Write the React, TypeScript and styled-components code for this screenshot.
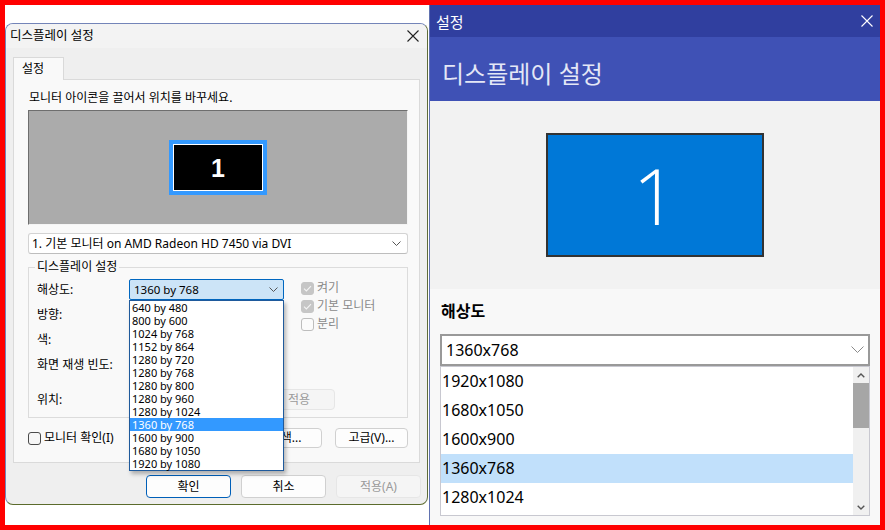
import React from "react";
import styled, { createGlobalStyle } from "styled-components";

const Global = createGlobalStyle`
  html, body { margin: 0; padding: 0; background: #fff; }
  body { font-family: "Noto Sans", "Noto Sans CJK KR", sans-serif; }
  * { box-sizing: border-box; }
`;

const Frame = styled.div`
  width: 885px;
  height: 530px;
  border: 5px solid #ff0000;
  background: #fff;
  display: flex;
  overflow: hidden;
`;

/* ---------- Left: classic dialog ---------- */

const LeftPane = styled.div`
  width: 424px;
  flex: none;
  padding-top: 18px;
`;

const Dialog = styled.div`
  width: 423px;
  height: 482px;
  background: #efefef;
  border: 1px solid;
  border-color: #7384b8 #5d6c3a #5b6b2c #7384b8;
  border-radius: 8px;
  overflow: hidden;
  display: flex;
  flex-direction: column;
  font-size: 12px;
  line-height: 14px;
  color: #000;
`;

const DlgTitleBar = styled.div`
  height: 24px;
  flex: none;
  background: #f3f3f3;
  display: flex;
  align-items: center;
  justify-content: space-between;
  padding: 0 8px 0 4px;
  font-size: 12.5px;
`;

const TabStrip = styled.div`
  padding: 9px 0 0 7px;
  display: flex;
`;

const Tab = styled.div`
  position: relative;
  z-index: 1;
  width: 51px;
  height: 23px;
  margin-bottom: -1px;
  background: #f9f9f9;
  border: 1px solid #d9d9d9;
  border-bottom: none;
  padding-left: 8px;
  line-height: 21px;
`;

const TabPanel = styled.div`
  margin-left: 7px;
  width: 407px;
  height: 384px;
  flex: none;
  background: #f9f9f9;
  border: 1px solid #dadada;
  padding: 10px 11px 0 14px;
  display: flex;
  flex-direction: column;
`;

const Instruction = styled.div`
  height: 16px;
  line-height: 16px;
  padding-left: 1px;
`;

const ArrangeArea = styled.div`
  margin-top: 4px;
  height: 115px;
  background: #ababab;
  border: 1px solid;
  border-color: #6e6e6e #f4f4f4 #f4f4f4 #6e6e6e;
  display: flex;
  align-items: center;
  justify-content: center;
`;

const SmallMonitor = styled.div`
  width: 98px;
  height: 55px;
  border: 4px solid #3399ff;
`;

const SmallScreen = styled.div`
  height: 100%;
  border: 1px solid #fff;
  background: #000;
  color: #fff;
  font-family: "Liberation Sans", Arial, sans-serif;
  font-weight: bold;
  font-size: 25px;
  display: flex;
  align-items: center;
  justify-content: center;
`;

const MonitorSelect = styled.div`
  margin-top: 8px;
  height: 21px;
  background: #fff;
  border: 1px solid #d3d3d3;
  border-bottom-color: #bdbdbd;
  border-radius: 3px;
  display: flex;
  align-items: center;
  justify-content: space-between;
  padding: 0 6px 0 3px;
`;

const Group = styled.fieldset`
  margin: 6px 0 0 0;
  border: 1px solid #dcdcdc;
  padding: 5px 8px 7px 8px;
  min-width: 0;
`;

const GroupLegend = styled.legend`
  padding: 0 2px;
  margin-left: -2px;
  line-height: 14px;
`;

const SettingsGrid = styled.div`
  display: grid;
  grid-template-columns: 92px 155px 1fr;
  grid-template-rows: 21px 21px 21px 21px 31px;
  row-gap: 4px;
`;

const FieldLabel = styled.div<{ $last?: boolean }>`
  grid-column: 1;
  display: flex;
  align-items: center;
  align-self: ${(p) => (p.$last ? "end" : "stretch")};
  height: 21px;
`;

const ComboWrap = styled.div`
  grid-column: 2;
  position: relative;
`;

const Combo = styled.div<{ $open?: boolean }>`
  height: 21px;
  background: ${(p) => (p.$open ? "#cce4f7" : "#fdfdfd")};
  border: 1px solid ${(p) => (p.$open ? "#0067c0" : "#d0d0d0")};
  border-radius: 2px;
  display: flex;
  align-items: center;
  justify-content: space-between;
  padding: 0 5px 0 4px;
  font-size: 11.5px;
`;

const DropList = styled.div`
  position: absolute;
  z-index: 10;
  top: 21px;
  left: 0;
  width: 155px;
  background: #fff;
  border: 1px solid #1f5a9c;
  box-shadow: 2px 3px 4px rgba(0, 0, 0, 0.28);
  display: flex;
  flex-direction: column;
`;

const DropItem = styled.div<{ $selected?: boolean }>`
  height: 13px;
  line-height: 13px;
  padding-left: 2px;
  font-size: 11px;
  background: ${(p) => (p.$selected ? "#3399ff" : "transparent")};
  color: ${(p) => (p.$selected ? "#fff" : "#000")};
`;

const CheckColumn = styled.div`
  grid-column: 3;
  grid-row: 1 / span 4;
  padding-left: 17px;
  display: flex;
  flex-direction: column;
`;

const CheckLine = styled.label<{ $muted?: boolean }>`
  height: 18px;
  display: flex;
  align-items: center;
  gap: 3px;
  color: ${(p) => (p.$muted ? "#8a8a8a" : "#000")};
`;

const Box = styled.span<{ $checked?: boolean; $disabled?: boolean }>`
  width: 13px;
  height: 13px;
  flex: none;
  border-radius: 3px;
  display: inline-flex;
  align-items: center;
  justify-content: center;
  background: ${(p) => (p.$checked ? "#c6c6c6" : p.$disabled ? "#fbfbfb" : "#f6f6f6")};
  border: 1px solid
    ${(p) => (p.$checked ? "#c6c6c6" : p.$disabled ? "#bdbdbd" : "#4a4a4a")};
`;

const PositionCell = styled.div`
  grid-column: 2 / span 2;
  align-self: end;
  height: 21px;
  display: flex;
  gap: 4px;
`;

const PosField = styled.div`
  width: 60px;
  height: 21px;
  background: #fff;
  border: 1px solid #d0d0d0;
`;

const Btn = styled.button<{ $w: number; $h?: number; $primary?: boolean; $off?: boolean; $ml?: number }>`
  width: ${(p) => p.$w}px;
  height: ${(p) => p.$h ?? 20}px;
  margin-left: ${(p) => p.$ml ?? 0}px;
  flex: none;
  padding: 0;
  font-family: inherit;
  font-size: 12px;
  line-height: 14px;
  border-radius: 4px;
  background: ${(p) => (p.$off ? "#f5f5f5" : "#fdfdfd")};
  color: ${(p) => (p.$off ? "#9a9a9a" : "#000")};
  border: 1px solid ${(p) => (p.$primary ? "#005fb8" : p.$off ? "#e6e6e6" : "#d0d0d0")};
`;

const IdentifyRow = styled.div`
  margin-top: 10px;
  height: 20px;
  display: flex;
  align-items: center;
  justify-content: space-between;
`;

const ButtonGroup = styled.div<{ $gap: number }>`
  display: flex;
  gap: ${(p) => p.$gap}px;
`;

const DialogButtons = styled.div`
  margin-top: 12px;
  padding-right: 6px;
  display: flex;
  justify-content: flex-end;
  gap: 10px;
`;

/* ---------- Right: modern settings ---------- */

const RightPane = styled.div`
  flex: 1;
  display: flex;
  flex-direction: column;
  border-left: 1px solid #6172b0;
  background: #f8f8f8;
  font-family: "Noto Sans", "Noto Sans CJK KR", sans-serif;
`;

const WinTitle = styled.div`
  height: 32px;
  flex: none;
  background: #303f9f;
  color: #fff;
  font-size: 15px;
  display: flex;
  align-items: center;
  justify-content: space-between;
  padding: 0 7px 0 6px;
`;

const Header = styled.div`
  height: 64px;
  flex: none;
  background: #3f51b5;
  color: #e4e7f6;
  font-size: 24px;
  display: flex;
  align-items: center;
  padding: 6px 0 0 12px;
`;

const MonitorArea = styled.div`
  height: 188px;
  flex: none;
  background: #f2f2f2;
  display: flex;
  align-items: center;
  justify-content: center;
`;

const BigMonitor = styled.div`
  width: 218px;
  height: 124px;
  background: #0078d7;
  border: 2px solid #333;
  color: #fff;
  font-family: "Open Sans", "Noto Sans", sans-serif;
  font-weight: 300;
  font-size: 78px;
  display: flex;
  align-items: center;
  justify-content: center;
`;

const Section = styled.div`
  flex: 1;
  padding: 11px 10px 0 10px;
  display: flex;
  flex-direction: column;
`;

const SectionTitle = styled.div`
  font-size: 16px;
  font-weight: bold;
  line-height: 22px;
  padding-left: 1px;
`;

const BigSelect = styled.div`
  margin-top: 12px;
  height: 32px;
  background: #fff;
  border: 2px solid #999;
  display: flex;
  align-items: center;
  justify-content: space-between;
  padding: 0 4px 0 4px;
  font-size: 16px;
`;

const BigList = styled.div`
  height: 150px;
  background: #fff;
  border: 1px solid #c8c8d0;
  display: flex;
`;

const BigItems = styled.div`
  flex: 1;
  overflow: hidden;
`;

const BigItem = styled.div<{ $selected?: boolean }>`
  height: 29px;
  line-height: 29px;
  padding-left: 1px;
  font-size: 16px;
  background: ${(p) => (p.$selected ? "#c1e0fb" : "transparent")};
`;

const ScrollBar = styled.div`
  width: 16px;
  flex: none;
  background: #f0f0f0;
  display: flex;
  flex-direction: column;
`;

const ScrollArrow = styled.div`
  height: 16px;
  display: flex;
  align-items: center;
  justify-content: center;
`;

const ScrollTrack = styled.div`
  flex: 1;
`;

const ScrollThumb = styled.div`
  height: 45px;
  background: #a6a6a6;
`;

/* ---------- icons ---------- */

const Chevron = ({ w = 9, color = "#555", sw = 1 }: { w?: number; color?: string; sw?: number }) => (
  <svg width={w} height={Math.ceil(w / 2) + 1} viewBox={`0 0 ${w} ${Math.ceil(w / 2) + 1}`}>
    <path d={`M0.5 0.5 L${w / 2} ${w / 2} L${w - 0.5} 0.5`} fill="none" stroke={color} strokeWidth={sw} />
  </svg>
);

const UpChevron = () => (
  <svg width="8" height="5" viewBox="0 0 8 5">
    <path d="M0.7 4.3 L4 1 L7.3 4.3" fill="none" stroke="#555" strokeWidth="1.4" />
  </svg>
);

const DownChevron = () => (
  <svg width="8" height="5" viewBox="0 0 8 5">
    <path d="M0.7 0.7 L4 4 L7.3 0.7" fill="none" stroke="#555" strokeWidth="1.4" />
  </svg>
);

const CloseX = ({ size, color }: { size: number; color: string }) => (
  <svg width={size} height={size} viewBox={`0 0 ${size} ${size}`}>
    <path d={`M0.5 0.5 L${size - 0.5} ${size - 0.5} M${size - 0.5} 0.5 L0.5 ${size - 0.5}`} stroke={color} strokeWidth="1.1" />
  </svg>
);

const Tick = () => (
  <svg width="9" height="7" viewBox="0 0 9 7">
    <path d="M1 3.6 L3.4 6 L8 1.2" fill="none" stroke="#f4f4f4" strokeWidth="1.1" />
  </svg>
);

const resolutions = [
  "640 by 480",
  "800 by 600",
  "1024 by 768",
  "1152 by 864",
  "1280 by 720",
  "1280 by 768",
  "1280 by 800",
  "1280 by 960",
  "1280 by 1024",
  "1360 by 768",
  "1600 by 900",
  "1680 by 1050",
  "1920 by 1080",
];

const modernRes = ["1920x1080", "1680x1050", "1600x900", "1360x768", "1280x1024"];

export default function App() {
  return (
    <>
      <Global />
      <Frame>
        <LeftPane>
          <Dialog>
            <DlgTitleBar>
              <span>디스플레이 설정</span>
              <CloseX size={12} color="#222" />
            </DlgTitleBar>
            <TabStrip>
              <Tab>설정</Tab>
            </TabStrip>
            <TabPanel>
              <Instruction>모니터 아이콘을 끌어서 위치를 바꾸세요.</Instruction>
              <ArrangeArea>
                <SmallMonitor>
                  <SmallScreen>1</SmallScreen>
                </SmallMonitor>
              </ArrangeArea>
              <MonitorSelect>
                <span>1. 기본 모니터 on AMD Radeon HD 7450 via DVI</span>
                <Chevron />
              </MonitorSelect>
              <Group>
                <GroupLegend>디스플레이 설정</GroupLegend>
                <SettingsGrid>
                  <FieldLabel style={{ gridRow: 1 }}>해상도:</FieldLabel>
                  <ComboWrap style={{ gridRow: 1 }}>
                    <Combo $open>
                      <span>1360 by 768</span>
                      <Chevron />
                    </Combo>
                    <DropList>
                      {resolutions.map((r) => (
                        <DropItem key={r} $selected={r === "1360 by 768"}>
                          {r}
                        </DropItem>
                      ))}
                    </DropList>
                  </ComboWrap>
                  <CheckColumn>
                    <CheckLine $muted>
                      <Box $checked $disabled>
                        <Tick />
                      </Box>
                      켜기
                    </CheckLine>
                    <CheckLine $muted>
                      <Box $checked $disabled>
                        <Tick />
                      </Box>
                      기본 모니터
                    </CheckLine>
                    <CheckLine $muted>
                      <Box $disabled />
                      분리
                    </CheckLine>
                  </CheckColumn>
                  <FieldLabel style={{ gridRow: 2 }}>방향:</FieldLabel>
                  <ComboWrap style={{ gridRow: 2 }}>
                    <Combo>
                      <Chevron />
                    </Combo>
                  </ComboWrap>
                  <FieldLabel style={{ gridRow: 3 }}>색:</FieldLabel>
                  <ComboWrap style={{ gridRow: 3 }}>
                    <Combo>
                      <Chevron />
                    </Combo>
                  </ComboWrap>
                  <FieldLabel style={{ gridRow: 4 }}>화면 재생 빈도:</FieldLabel>
                  <ComboWrap style={{ gridRow: 4 }}>
                    <Combo>
                      <Chevron />
                    </Combo>
                  </ComboWrap>
                  <FieldLabel $last style={{ gridRow: 5 }}>
                    위치:
                  </FieldLabel>
                  <PositionCell style={{ gridRow: 5 }}>
                    <PosField />
                    <PosField />
                    <Btn $w={72} $h={21} $off $ml={6}>
                      적용
                    </Btn>
                  </PositionCell>
                </SettingsGrid>
              </Group>
              <IdentifyRow>
                <CheckLine>
                  <Box />
                  모니터 확인(I)
                </CheckLine>
                <ButtonGroup $gap={13}>
                  <Btn $w={73}>탐색...</Btn>
                  <Btn $w={73}>고급(V)...</Btn>
                </ButtonGroup>
              </IdentifyRow>
            </TabPanel>
            <DialogButtons>
              <Btn $w={85} $h={23} $primary>
                확인
              </Btn>
              <Btn $w={85} $h={23}>
                취소
              </Btn>
              <Btn $w={85} $h={23} $off>
                적용(A)
              </Btn>
            </DialogButtons>
          </Dialog>
        </LeftPane>

        <RightPane>
          <WinTitle>
            <span>설정</span>
            <CloseX size={12} color="#fff" />
          </WinTitle>
          <Header>디스플레이 설정</Header>
          <MonitorArea>
            <BigMonitor>1</BigMonitor>
          </MonitorArea>
          <Section>
            <SectionTitle>해상도</SectionTitle>
            <BigSelect>
              <span>1360x768</span>
              <Chevron w={13} color="#8a8a8a" />
            </BigSelect>
            <BigList>
              <BigItems>
                {modernRes.map((r) => (
                  <BigItem key={r} $selected={r === "1360x768"}>
                    {r}
                  </BigItem>
                ))}
              </BigItems>
              <ScrollBar>
                <ScrollArrow>
                  <UpChevron />
                </ScrollArrow>
                <ScrollThumb />
                <ScrollTrack />
                <ScrollArrow>
                  <DownChevron />
                </ScrollArrow>
              </ScrollBar>
            </BigList>
          </Section>
        </RightPane>
      </Frame>
    </>
  );
}
